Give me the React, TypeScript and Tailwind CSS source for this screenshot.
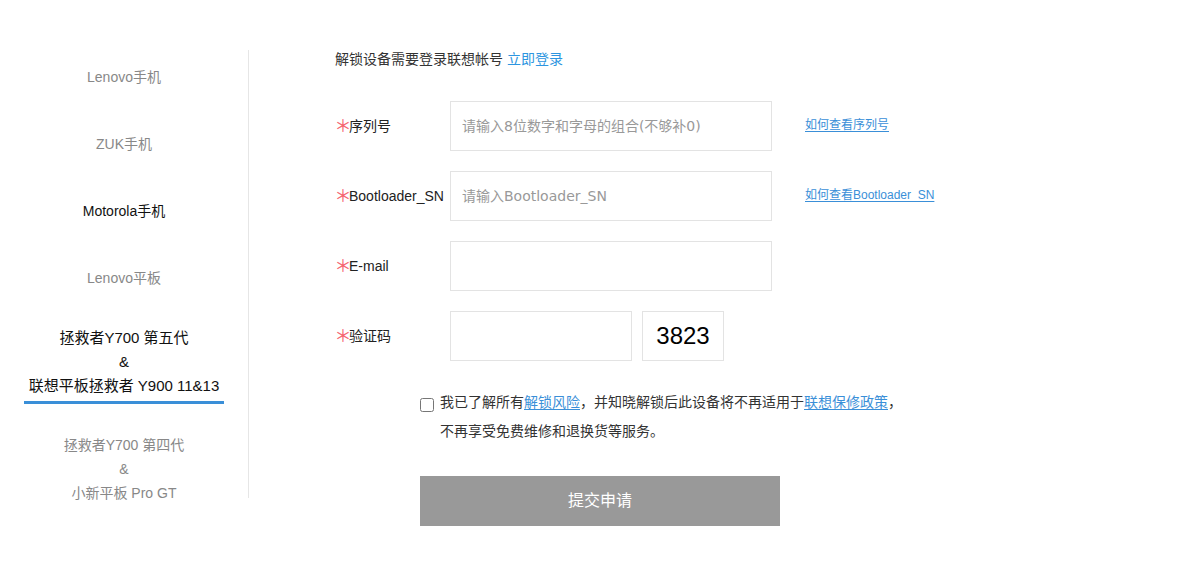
import React from "react";

const sideItems = [
  { lines: ["Lenovo手机"] },
  { lines: ["ZUK手机"] },
  { lines: ["Motorola手机"], dark: true },
  { lines: ["Lenovo平板"] },
  { lines: ["拯救者Y700 第五代", "&", "联想平板拯救者 Y900 11&13"], dark: true, active: true },
  { lines: ["拯救者Y700 第四代", "&", "小新平板 Pro GT"] },
];

function Star() {
  return (
    <span className="w-[12px] h-[14px] flex items-center justify-center overflow-visible">
      <span className="text-[#f5646e] text-[17px] leading-none relative -top-[2px] font-['Noto_Sans_CJK_SC',sans-serif]">
        ＊
      </span>
    </span>
  );
}

function Row({ label, children, tip }: { label: string; children: React.ReactNode; tip?: string }) {
  return (
    <div className="flex items-center h-[50px] ml-[2px]">
      <div className="w-[113px] text-[14px] text-[#222] flex items-center">
        <Star />
        <span>{label}</span>
      </div>
      {children}
      {tip && (
        <a href="#" className="ml-[33px] text-[12px] text-[#3a8fd8] underline underline-offset-2 -mt-[2px]">
          {tip}
        </a>
      )}
    </div>
  );
}

const inputCls =
  "h-[50px] border border-[#e3e3e3] px-[11px] text-[14px] text-[#333] outline-none placeholder:text-[#999] font-['DejaVu_Sans','Noto_Sans_CJK_SC',sans-serif]";

export default function App() {
  return (
    <div className="w-[1200px] h-[586px] bg-white flex font-['Liberation_Sans','Noto_Sans_CJK_SC',sans-serif]">
      <aside className="w-[249px] mt-[50px] h-[448px] border-r border-[#e6e6e6] shrink-0">
        {sideItems.map((item, i) => (
          <div
            key={i}
            className={
              item.lines.length > 1
                ? i === 4
                  ? "pt-[8px] pb-[29px] flex justify-center"
                  : "flex justify-center"
                : "pt-[15px] pb-[28px] flex justify-center"
            }
          >
            <div
              className={
                "text-center leading-[24px] " +
                (item.dark ? "text-[#111] " : "text-[#888] ") +
                (item.active
                  ? "text-[15px] w-[200px] pb-[3px] border-b-[3px] border-[#3a8fd8]"
                  : "text-[14px]")
              }
            >
              {item.lines.map((l, j) => (
                <div key={j}>{l}</div>
              ))}
            </div>
          </div>
        ))}
      </aside>

      <main className="pl-[86px] pt-[49px]">
        <div className="text-[14px] leading-[20px] text-[#333]">
          解锁设备需要登录联想帐号 <a href="#" className="text-[#2d95e0]">立即登录</a>
        </div>

        <div className="mt-[32px] flex flex-col gap-[20px]">
          <Row label="序列号" tip="如何查看序列号">
            <input className={inputCls + " w-[322px]"} placeholder="请输入8位数字和字母的组合(不够补0)" />
          </Row>
          <Row label="Bootloader_SN" tip="如何查看Bootloader_SN">
            <input className={inputCls + " w-[322px]"} placeholder="请输入Bootloader_SN" />
          </Row>
          <Row label="E-mail">
            <input className={inputCls + " w-[322px]"} />
          </Row>
          <Row label="验证码">
            <input className={inputCls + " w-[182px]"} />
            <div className="ml-[10px] w-[82px] h-[50px] border border-[#e3e3e3] flex items-center justify-center text-[24px] text-black">
              3823
            </div>
          </Row>
        </div>

        <div className="ml-[85px] mt-[27px] flex items-start gap-[6px] text-[14px] leading-[29px] text-[#333]">
          <input type="checkbox" className="w-[14px] h-[14px] mt-[10px] m-0 shrink-0" />
          <div>
            <div>
              我已了解所有<a href="#" className="text-[#3a8fd8] underline underline-offset-2">解锁风险</a>，并知晓解锁后此设备将不再适用于
              <a href="#" className="text-[#3a8fd8] underline underline-offset-2">联想保修政策</a>，
            </div>
            <div>不再享受免费维修和退换货等服务。</div>
          </div>
        </div>

        <button className="ml-[85px] mt-[30px] w-[360px] h-[50px] bg-[#999] text-white text-[16px] flex items-center justify-center">
          提交申请
        </button>
      </main>
    </div>
  );
}
